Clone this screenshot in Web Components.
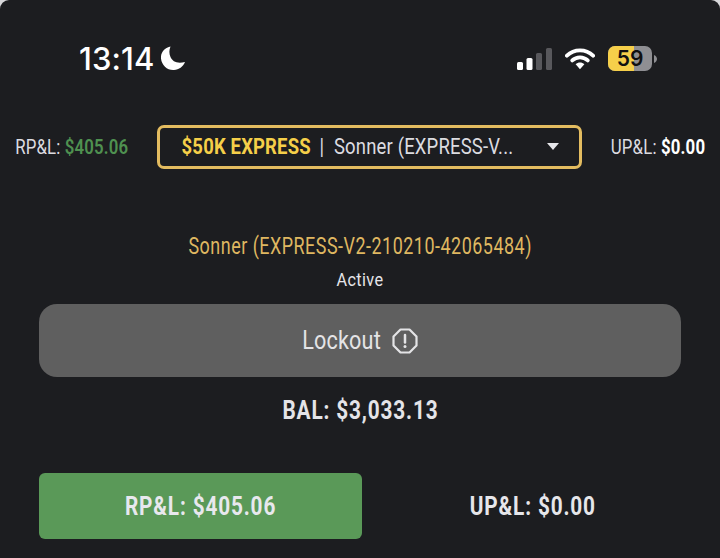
<!DOCTYPE html>
<html>
<head>
<meta charset="utf-8">
<style>
  html, body { margin: 0; height: 558px; overflow: hidden; background: #d8d8da; }
  body { font-family: Roboto, "Liberation Sans", sans-serif; color: #e6e6ea; }
</style>
</head>
<body>
<app-screen>
  <status-bar></status-bar>
  <account-bar></account-bar>
  <account-info></account-info>
  <lockout-button></lockout-button>
  <cond-text class="bal" squeeze="0.8">BAL: $3,033.13</cond-text>
  <pnl-row></pnl-row>
</app-screen>

<script>
class AppScreen extends HTMLElement {
  constructor() {
    super();
    this.attachShadow({ mode: 'open' });
    this.shadowRoot.innerHTML = `
      <style>
        :host { display: flex; flex-direction: column; height: 558px; overflow: hidden; background: #1c1d20; border-radius: 9px 9px 0 0; }
        ::slotted(.bal) { align-self: center; margin-top: 17px; font-size: 26px; font-weight: 700; color: #e4e4e8; line-height: 32px; letter-spacing: 1.05px; }
      </style>
      <slot></slot>`;
  }
}

// the reference uses a condensed face, Roboto squeezed horizontally stands in for it
class CondText extends HTMLElement {
  constructor() {
    super();
    this.attachShadow({ mode: 'open' });
    this.shadowRoot.innerHTML = `
      <style>
        :host { display: inline-block; white-space: nowrap; letter-spacing: 0.2px; }
        span { display: inline-block; transform-origin: center; }
      </style>
      <span><slot></slot></span>`;
  }
  connectedCallback() {
    const span = this.shadowRoot.querySelector('span');
    const k = parseFloat(this.getAttribute('squeeze') || '0.84');
    span.style.transform = `scaleX(${k})`;
    const w = span.getBoundingClientRect().width / k;
    span.style.margin = `0 ${-(w - w * k) / 2}px`;
  }
}

class StatusBar extends HTMLElement {
  constructor() {
    super();
    this.attachShadow({ mode: 'open' });
    this.shadowRoot.innerHTML = `
      <style>
        :host { display: flex; align-items: center; height: 117px; padding: 0 63px 0 79px; box-sizing: border-box; }
        .time { font: 500 31px/36px Inter, sans-serif; color: #fff; letter-spacing: 0.1px; }
        .moon { margin-left: 6px; }
        .right { margin-left: auto; display: flex; align-items: center; gap: 13px; }
        .batt { position: relative; width: 44px; height: 25px; border-radius: 7px; overflow: hidden; background: #8f8f93;
                display: flex; align-items: center; justify-content: center; font: 600 21px Inter, sans-serif; color: #111; }
        .fill { position: absolute; left: 0; top: 0; bottom: 0; width: 26px; background: #f6cf4a; }
        .batt span { position: relative; }
        .cap { display: block; margin-left: 2px; }
        .bwrap { display: flex; align-items: center; }
      </style>
      <span class="time">13:14</span>
      <svg class="moon" width="27" height="27" viewBox="0 0 27 27"><path fill="#fff" d="M10.5 1.5C3.8 3 .5 8 1 13.500 1.700 20.500 7.500 25.500 14 25c5-.4 9-3 11-8-8 2-12.500-.5-14.500-5C9 8.500 9 5 10.500 1.500Z"/></svg>
      <div class="right">
        <svg width="35" height="22" viewBox="0 0 35 22">
          <rect x="0" y="14" width="6" height="8" rx="1.500" fill="#fff"/>
          <rect x="9.500" y="10" width="6" height="12" rx="1.500" fill="#fff"/>
          <rect x="19" y="5" width="6" height="17" rx="1.500" fill="#58585c"/>
          <rect x="29" y="0" width="6" height="22" rx="1.500" fill="#58585c"/>
        </svg>
        <svg width="30" height="23" viewBox="0 0 31 23">
          <path d="M2 8.500C9.500 1.300 21.500 1.300 29 8.500" fill="none" stroke="#fff" stroke-width="4" stroke-linecap="round"/>
          <path d="M7.500 13.500C12 9.300 19 9.300 23.500 13.500" fill="none" stroke="#fff" stroke-width="4" stroke-linecap="round"/>
          <path d="M11 17.500C13.500 15 17.500 15 20 17.500L15.500 22.500Z" fill="#fff"/>
        </svg>
        <div class="bwrap">
          <div class="batt"><div class="fill"></div><span>59</span></div>
          <svg class="cap" width="3" height="8" viewBox="0 0 3 8"><path d="M0 0C2 1 3 2.500 3 4S2 7 0 8Z" fill="#8f8f93"/></svg>
        </div>
      </div>`;
  }
}

class AccountBar extends HTMLElement {
  constructor() {
    super();
    this.attachShadow({ mode: 'open' });
    this.shadowRoot.innerHTML = `
      <style>
        :host { display: flex; align-items: center; justify-content: space-between; padding: 8px 15px 0; height: 43px; font-size: 21px; color: #dcdce0; }
        .green { color: #4f9150; font-weight: 600; letter-spacing: 0.2px; }
        .white { color: #fff; font-weight: 700; }
        .select { width: 425px; height: 44px; box-sizing: border-box; border: 3px solid #e3bc60; border-radius: 7px;
                  display: flex; align-items: center; padding: 0 20px 0 22px; font-size: 22px; }
        .plan { color: #f5cf49; font-weight: 700; }
        .sep { margin: 0 11.600px 0 10.400px; color: #dcdce0; }
        .arrow { margin-left: auto; width: 0; height: 0; border-left: 6.500px solid transparent; border-right: 6.500px solid transparent; border-top: 7px solid #e6e6ea; }
      </style>
      <cond-text squeeze="0.8">RP&amp;L: <span class="green">$405.06</span></cond-text>
      <div class="select">
        <cond-text><span class="plan">$50K EXPRESS</span><span class="sep">|</span>Sonner (EXPRESS-V...</cond-text>
        <span class="arrow"></span>
      </div>
      <cond-text squeeze="0.8">UP&amp;L: <span class="white">$0.00</span></cond-text>`;
  }
}

class AccountInfo extends HTMLElement {
  constructor() {
    super();
    this.attachShadow({ mode: 'open' });
    this.shadowRoot.innerHTML = `
      <style>
        :host { display: flex; flex-direction: column; align-items: center; margin-top: 64px; }
        .name { font-size: 23px; line-height: 30px; color: #dfb761; letter-spacing: 0.64px; }
        .state { font-size: 18px; line-height: 24px; margin-top: 6px; color: #e6e6ea; letter-spacing: 0.4px; }
      </style>
      <cond-text class="name" squeeze="0.78">Sonner (EXPRESS-V2-210210-42065484)</cond-text>
      <cond-text class="state" squeeze="0.9">Active</cond-text>`;
  }
}

class LockoutButton extends HTMLElement {
  constructor() {
    super();
    this.attachShadow({ mode: 'open' });
    this.shadowRoot.innerHTML = `
      <style>
        :host { display: flex; align-items: center; justify-content: center; gap: 11px; height: 73px; margin: 12px 39px 0;
                border-radius: 18px; background: #5f5f5f; color: #e4e4e6; font-size: 25px; }
      </style>
      <cond-text squeeze="0.865">Lockout</cond-text>
      <svg width="26" height="26" viewBox="0 0 26 26">
        <path d="M8.500 1.500h9l7 7v9l-7 7h-9l-7-7v-9Z" fill="none" stroke="#e4e4e6" stroke-width="2.200" stroke-linejoin="round"/>
        <path d="M13 7v7.500" stroke="#e4e4e6" stroke-width="2.500" stroke-linecap="round"/>
        <circle cx="13" cy="18.500" r="1.500" fill="#e4e4e6"/>
      </svg>`;
  }
}

class PnlRow extends HTMLElement {
  constructor() {
    super();
    this.attachShadow({ mode: 'open' });
    this.shadowRoot.innerHTML = `
      <style>
        :host { display: grid; grid-template-columns: 323px 1fr; margin: 47px 39px 0; font-size: 26px; font-weight: 700; }
        .tab { height: 66px; display: flex; align-items: center; justify-content: center; border-radius: 6px; }
        .on { background: #5a9958; color: #e8e8ee; }
        .off { padding-left: 22px; }
        cond-text { letter-spacing: 1.05px; }
      </style>
      <div class="tab on"><cond-text squeeze="0.8">RP&amp;L: $405.06</cond-text></div>
      <div class="tab off"><cond-text squeeze="0.8">UP&amp;L: $0.00</cond-text></div>`;
  }
}

customElements.define('cond-text', CondText);
customElements.define('status-bar', StatusBar);
customElements.define('account-bar', AccountBar);
customElements.define('account-info', AccountInfo);
customElements.define('lockout-button', LockoutButton);
customElements.define('pnl-row', PnlRow);
customElements.define('app-screen', AppScreen);
</script>
</body>
</html>
